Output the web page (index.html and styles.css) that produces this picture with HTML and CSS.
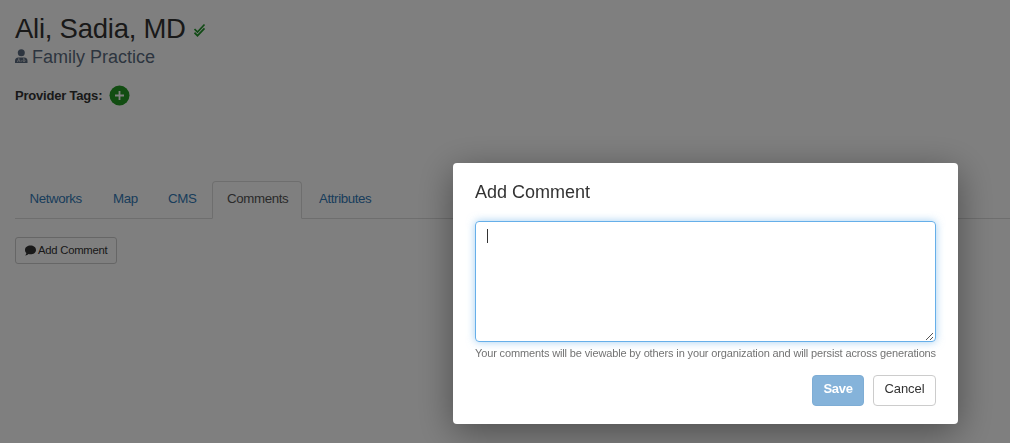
FILE: index.html
```html
<!DOCTYPE html>
<html lang="en">
<head>
<meta charset="utf-8">
<title>Ali, Sadia, MD</title>
<link rel="stylesheet" href="styles.css">
</head>
<body>
<main class="page">
  <h1 class="name"><span class="name-text">Ali, Sadia, MD</span>
    <svg class="verified" width="12" height="14" viewBox="0 0 12 14"><path d="M.5 6 3.500 9 10.500 1.500M.5 9.700 3.500 12.700 10.500 5.400" fill="none" stroke="#22942a" stroke-width="1.700"/></svg>
  </h1>
  <div class="specialty">
    <svg width="13" height="14" viewBox="0 0 13 14"><circle cx="6.300" cy="3.700" r="3.500" fill="#5b6b80"/><path d="M0 14v-2Q0 8.900 3.300 8.500H9.200Q12.500 8.900 12.500 12v2Z" fill="#5b6b80"/><path d="M3.800 9v2M2.700 13v-1q0-1 1.100-1t1.100 1v1M8.800 9v1.500M6 12h1" fill="none" stroke="#ddd" stroke-width=".8"/><circle cx="9" cy="11.700" r="1" fill="none" stroke="#ddd" stroke-width=".8"/></svg>
    <span class="specialty-text">Family Practice</span>
  </div>
  <div class="tags"><span class="tags-text">Provider Tags:</span>
    <svg width="21" height="21" viewBox="0 0 21 21"><circle cx="10.500" cy="10.500" r="10" fill="#249a24"/><path d="M10.500 6v9M6 10.500h9" stroke="#fff" stroke-width="1.800"/></svg>
  </div>
  <nav class="tabs">
    <a class="tab networks"><span>Networks</span></a>
    <a class="tab map"><span>Map</span></a>
    <a class="tab cms"><span>CMS</span></a>
    <a class="tab comments active"><span>Comments</span></a>
    <a class="tab attributes"><span>Attributes</span></a>
  </nav>
  <button class="add"><svg width="11" height="11" viewBox="0 0 11 11"><path d="M5.500.5C2.500.5 0 2.300 0 4.900c0 1.300.5 2.300 1.400 3.100Q1.200 9.500.2 10.400q2 .1 3.400-1.300c4 .8 7.400-1.200 7.400-4.200C11 2.300 8.500.5 5.500.5Z" fill="#333"/></svg><span>Add Comment</span></button>
</main>
<div class="overlay">
  <section class="modal" role="dialog">
    <h2>Add Comment</h2>
    <div class="editor" role="textbox">
      <i class="caret"></i>
      <svg class="grip" width="9" height="9" viewBox="0 0 9 9"><path d="M1 8 8 1M5 8 8 5" stroke="#555" fill="none"/></svg>
    </div>
    <p class="hint"><span>Your comments will be viewable by others in your organization and will persist across generations</span></p>
    <div class="actions"><button class="save">Save</button><button class="cancel">Cancel</button></div>
  </section>
</div>
</body>
</html>
```
FILE: styles.css
```css
* { box-sizing: border-box; }
body {
  margin: 0;
  height: 443px;
  overflow: hidden;
  background: #fff;
  color: #333;
  font-family: "Liberation Sans", Arial, sans-serif;
}
button { font-family: inherit; margin: 0; }
svg { display: block; flex: none; }
.page { padding: 12px 0 0 15px; }
.name {
  display: flex;
  gap: 8px;
  margin: 0;
  height: 32px;
  font-size: 27.5px;
  font-weight: 400;
  line-height: 33px;
  letter-spacing: -.25px;
}
.verified { margin-top: 11px; }
.specialty {
  display: flex;
  gap: 4px;
  height: 26px;
  color: #5b6b80;
  font-size: 18px;
  line-height: 26px;
}
.specialty svg { margin-top: 5px; }
.tags {
  display: flex;
  align-items: center;
  gap: 7px;
  height: 21px;
  margin-top: 15px;
  font-size: 13px;
  font-weight: 700;
  letter-spacing: -.2px;
}
.tabs {
  display: flex;
  height: 38px;
  margin-top: 75px;
  border-bottom: 1px solid #ddd;
}
.tab {
  height: 38px;
  padding-left: 15px;
  border: 1px solid transparent;
  color: #337ab7;
  font-size: 13.3px;
  line-height: 34px;
  letter-spacing: -.38px;
  white-space: nowrap;
}
.networks { width: 83px; padding-left: 13.5px; }
.map { width: 56px; padding-left: 14px; }
.cms { width: 58px; padding-left: 13px; }
.comments { width: 90px; padding-left: 14px; }
.attributes { padding-left: 16px; }
.map, .cms { letter-spacing: -.3px; }
.active {
  border-color: #ddd;
  border-bottom-color: #fff;
  border-radius: 4px 4px 0 0;
  background: #fff;
  color: #555;
}
.add {
  display: flex;
  align-items: center;
  gap: 2px;
  width: 102px;
  height: 27px;
  margin-top: 18px;
  padding: 0 0 1px 9px;
  border: 1px solid #ccc;
  border-radius: 3px;
  background: #fff;
  color: #333;
  font-size: 11.3px;
  letter-spacing: -.25px;
  white-space: nowrap;
}
.overlay {
  position: fixed;
  inset: 0;
  padding: 163px 0 0 453px;
  background: rgba(0, 0, 0, .5);
}
.modal {
  width: 505px;
  height: 261px;
  padding: 16px 22px 0;
  border-radius: 4px;
  background: #fff;
  box-shadow: 0 8px 36px rgba(0, 0, 0, .4);
}
h2 {
  margin: 0 0 16px;
  font-size: 18px;
  font-weight: 400;
  line-height: 26px;
}
.editor {
  position: relative;
  height: 121px;
  padding: 7px 11px;
  border: 1px solid #66afe9;
  border-radius: 4px;
  box-shadow: 0 0 8px rgba(102, 175, 233, .6);
}
.caret { display: block; width: 1px; height: 14px; background: #333; }
.grip { position: absolute; right: 1px; bottom: 0; }
.hint {
  margin: 4px 0 0;
  height: 15px;
  color: #737373;
  font-size: 11px;
  letter-spacing: -.135px;
  line-height: 15px;
  white-space: nowrap;
}
.actions { display: flex; justify-content: flex-end; gap: 9px; margin-top: 14px; }
.actions button {
  height: 31px;
  padding: 0 0 4px;
  border-radius: 4px;
  font-size: 13px;
}
.save { width: 52px; border: 1px solid #7eadd5; background: #85b3da; color: #fff; font-weight: 700; letter-spacing: -.3px; }
.cancel { width: 63px; border: 1px solid #ccc; background: #fff; color: #333; letter-spacing: -.1px; }
```
